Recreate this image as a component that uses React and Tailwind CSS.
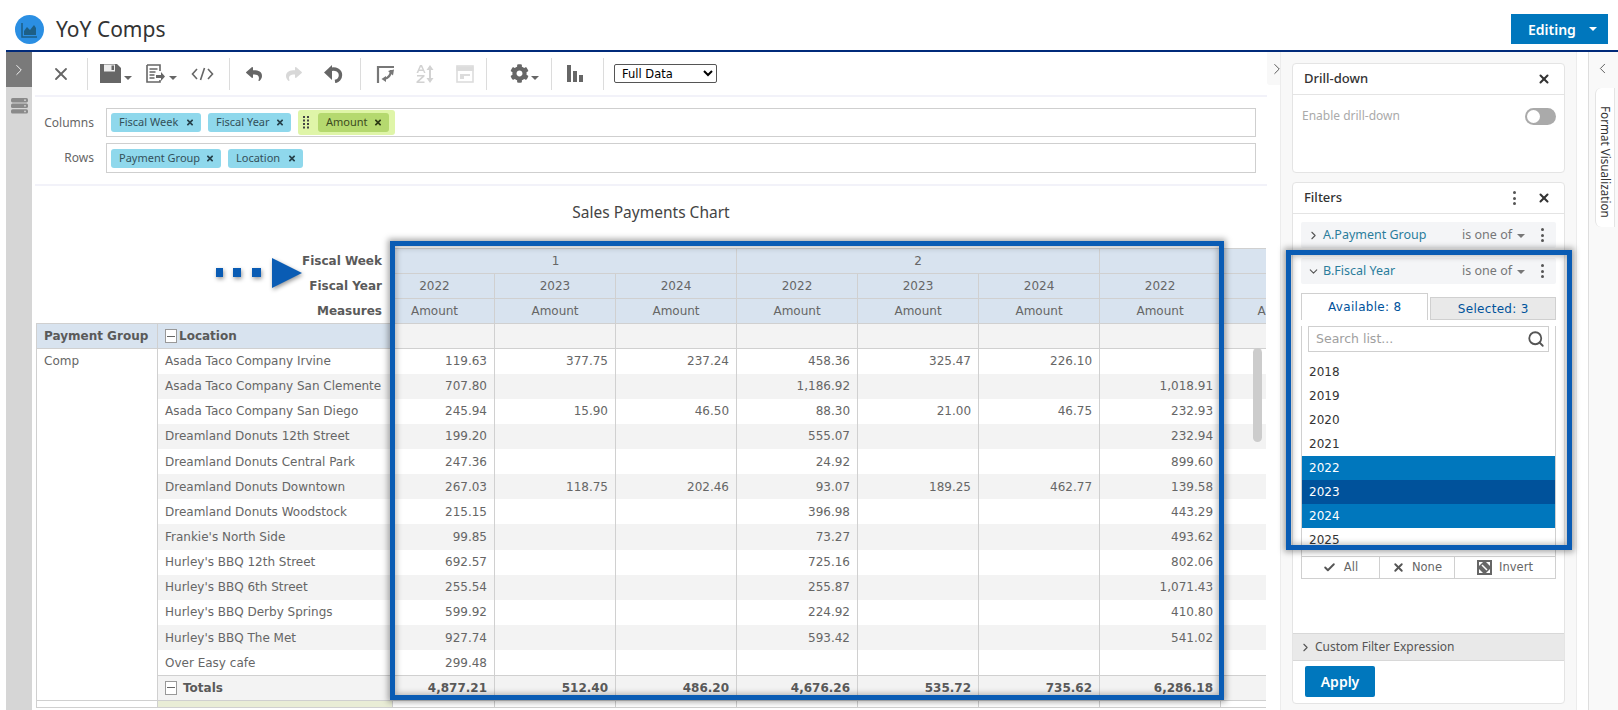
import React from 'react';
import { ChevronRight, ChevronLeft, ChevronDown, X, Search, Check } from 'lucide-react';
import { FaCog, FaReply, FaShare, FaTimes } from 'react-icons/fa';

const tableFont = "[font-family:'DejaVu_Sans',sans-serif]";

const rows = [
  ['Asada Taco Company Irvine', '119.63', '377.75', '237.24', '458.36', '325.47', '226.10', ''],
  ['Asada Taco Company San Clemente', '707.80', '', '', '1,186.92', '', '', '1,018.91'],
  ['Asada Taco Company San Diego', '245.94', '15.90', '46.50', '88.30', '21.00', '46.75', '232.93'],
  ['Dreamland Donuts 12th Street', '199.20', '', '', '555.07', '', '', '232.94'],
  ['Dreamland Donuts Central Park', '247.36', '', '', '24.92', '', '', '899.60'],
  ['Dreamland Donuts Downtown', '267.03', '118.75', '202.46', '93.07', '189.25', '462.77', '139.58'],
  ['Dreamland Donuts Woodstock', '215.15', '', '', '396.98', '', '', '443.29'],
  ["Frankie's North Side", '99.85', '', '', '73.27', '', '', '493.62'],
  ["Hurley's BBQ 12th Street", '692.57', '', '', '725.16', '', '', '802.06'],
  ["Hurley's BBQ 6th Street", '255.54', '', '', '255.87', '', '', '1,071.43'],
  ["Hurley's BBQ Derby Springs", '599.92', '', '', '224.92', '', '', '410.80'],
  ["Hurley's BBQ The Met", '927.74', '', '', '593.42', '', '', '541.02'],
  ['Over Easy cafe', '299.48', '', '', '', '', '', ''],
];
const totals = ['4,877.21', '512.40', '486.20', '4,676.26', '535.72', '735.62', '6,286.18'];
const years = ['2022', '2023', '2024', '2022', '2023', '2024', '2022'];
const colWidths = [121, 235, 102, 121, 121, 121, 121, 121, 121, 121];

const Logo = () => (
  <div className="w-[29px] h-[29px] rounded-full bg-[#2b8fe3] flex items-center justify-center">
    <svg width="17" height="16" viewBox="0 0 17 16" fill="none">
      <path d="M1 1v14h15" stroke="#1d5f86" strokeWidth="1.5" />
      <path d="M3 13V9l3-4 3 3 4-5 2 3v7z" fill="#1d5f86" />
    </svg>
  </div>
);

const ServerIcon = () => (
  <svg width="17" height="16" viewBox="0 0 17 16" fill="#8a8a8a">
    <rect x="0" y="0" width="17" height="4.4" rx="1.6" />
    <rect x="0" y="5.6" width="17" height="4.4" rx="1.6" />
    <rect x="0" y="11.2" width="17" height="4.4" rx="1.6" />
    <circle cx="14" cy="2.2" r="0.9" fill="#d6d6d6" />
    <circle cx="14" cy="7.8" r="0.9" fill="#d6d6d6" />
    <circle cx="14" cy="13.4" r="0.9" fill="#d6d6d6" />
  </svg>
);

const Caret = ({ className = 'border-t-[#666]' }) => (
  <span className={`inline-block w-0 h-0 border-x-[4px] border-x-transparent border-t-[4px] ${className}`} />
);

const Sep = ({ className }) => <div className={`w-px h-[32px] bg-[#dcdcdc] ${className}`} />;

const SaveIcon = () => (
  <svg width="21" height="19" viewBox="0 0 21 19">
    <path d="M0 0h17l4 4v15H0z" fill="#666" />
    <rect x="4" y="0.500" width="11" height="7" fill="#ececec" />
    <rect x="11.500" y="1.500" width="2.500" height="4.500" fill="#666" />
  </svg>
);

const DocIcon = () => (
  <svg width="20" height="19" viewBox="0 0 20 19" fill="none" stroke="#666">
    <path d="M1 1h13v6M14 16v2H1V1" strokeWidth="1.6" />
    <path d="M3.500 5h8M3.500 8h6M3.500 11h5M3.500 14h5" strokeWidth="1.400" />
    <path d="M10 11h5V8l4 4.500-4 4.500v-3h-5z" fill="#666" stroke="none" />
  </svg>
);

const CodeIcon = () => (
  <svg width="23" height="14" viewBox="0 0 23 14" fill="none" stroke="#666" strokeWidth="1.6">
    <path d="M6 2 1.500 7 6 12M17 2l4.500 5-4.500 5M13.500 1l-4 12" />
  </svg>
);

const RevertIcon = () => (
  <svg width="19" height="18" viewBox="0 0 19 18">
    <path d="M0 7.500 8 0v15z" fill="#666" />
    <path d="M6 4.500c6-1.500 10.500 1 10.500 5.500 0 3.500-2.500 6-5.500 6.500" fill="none" stroke="#666" strokeWidth="3.400" />
  </svg>
);

const SwapIcon = () => (
  <svg width="20" height="20" viewBox="0 0 20 20" fill="none" stroke="#777" strokeWidth="2.200">
    <path d="M2 19V3h16" />
    <path d="M15 6c0 5-2 8-7 9" />
    <path d="M5.500 15 10 12v6z" fill="#777" stroke="none" />
    <path d="M12 7l6-1.500-1 6z" fill="#777" stroke="none" />
  </svg>
);

const SortIcon = () => (
  <svg width="18" height="20" viewBox="0 0 18 20" fill="#d2d2d2">
    <path d="M4 1h2l3.500 8H8l-.8-2H3l-.8 2H.5zm1 1.800L3.500 5.500h3zM1 11h7.500v1.500L3 17.500h5.500V19H.5v-1.500L6 12.500H1z" />
    <path d="M14 1l3.500 5H15v8h2.500L14 19l-3.500-5H13V6h-2.500z" />
  </svg>
);

const LayoutIcon = () => (
  <svg width="18" height="18" viewBox="0 0 18 18" fill="none" stroke="#dcdcdc">
    <rect x="1" y="1" width="16" height="16" strokeWidth="1.6" />
    <rect x="1" y="2" width="16" height="3.500" fill="#dcdcdc" />
    <path d="M4 9h10v2H8v3H4z" fill="#dcdcdc" stroke="none" />
  </svg>
);

const BarsIcon = () => (
  <svg width="16" height="17" viewBox="0 0 16 17" fill="#666">
    <rect x="0" y="0" width="4" height="17" />
    <rect x="6" y="6" width="4" height="11" />
    <rect x="12" y="10" width="4" height="7" />
  </svg>
);

const GripIcon = () => (
  <svg width="7" height="13" viewBox="0 0 7 13" fill="#444">
    <rect x="0" y="0" width="2" height="2" />
    <rect x="4" y="0" width="2" height="2" />
    <rect x="0" y="3.500" width="2" height="2" />
    <rect x="4" y="3.500" width="2" height="2" />
    <rect x="0" y="7" width="2" height="2" />
    <rect x="4" y="7" width="2" height="2" />
    <rect x="0" y="10.500" width="2" height="2" />
    <rect x="4" y="10.500" width="2" height="2" />
  </svg>
);

const InvertIcon = () => (
  <svg width="15" height="15" viewBox="0 0 15 15">
    <rect width="15" height="15" fill="#666" />
    <path d="M2 2h4L2 6zM13 13H9l4-4zM13 2v4L9 2zM2 13V9l4 4z" fill="#fff" />
    <path d="M5 5l5 5" stroke="#fff" strokeWidth="1.500" />
  </svg>
);

const MinusBox = () => (
  <span className="inline-flex w-[12px] h-[14px] border border-[#999] bg-white items-center justify-center shrink-0">
    <span className="w-[8px] h-px bg-[#666]" />
  </span>
);

const Dots = ({ className = '' }) => (
  <div className={`flex flex-col gap-[2.5px] ${className}`}>
    <span className="w-[3px] h-[3px] rounded-full bg-[#555]" />
    <span className="w-[3px] h-[3px] rounded-full bg-[#555]" />
    <span className="w-[3px] h-[3px] rounded-full bg-[#555]" />
  </div>
);

const Chip = ({ label, className }) => (
  <div className={`h-[19px] rounded-[3px] bg-[#8fd8ec] flex items-center justify-between pl-[8px] pr-[7px] text-[11px] whitespace-nowrap text-[#33505a] ${className}`}>
    <span>{label}</span>
    <FaTimes className="w-[8px] h-[9px] text-[#25414b]" />
  </div>
);

const Toolbar = () => (
  <div className="h-[43px] flex items-center shrink-0">
    <X className="ml-[19px] w-[20px] h-[20px] text-[#666]" strokeWidth={2.2} />
    <Sep className="ml-[16px]" />
    <div className="ml-[12px]"><SaveIcon /></div>
    <Caret className="ml-[3px] mt-[8px] border-t-[#666]" />
    <div className="ml-[14px]"><DocIcon /></div>
    <Caret className="ml-[3px] mt-[8px] border-t-[#666]" />
    <div className="ml-[14px]"><CodeIcon /></div>
    <Sep className="ml-[15px]" />
    <FaReply className="ml-[15px] w-[18px] h-[16px] text-[#666]" />
    <FaShare className="ml-[22px] w-[18px] h-[16px] text-[#d8d8d8]" />
    <div className="ml-[21px]"><RevertIcon /></div>
    <Sep className="ml-[17px]" />
    <div className="ml-[15px]"><SwapIcon /></div>
    <div className="ml-[20px]"><SortIcon /></div>
    <div className="ml-[22px]"><LayoutIcon /></div>
    <Sep className="ml-[12px]" />
    <FaCog className="ml-[23px] w-[19px] h-[19px] text-[#666]" />
    <Caret className="ml-[2px] mt-[8px] border-t-[#666]" />
    <Sep className="ml-[12px]" />
    <div className="ml-[15px]"><BarsIcon /></div>
    <Sep className="ml-[20px]" />
    <select
      defaultValue="Full Data"
      className={`ml-[10px] w-[103px] h-[19px] border border-[#555] rounded-[2px] bg-white text-[11.5px] text-black pl-[3px] ${tableFont}`}
    >
      <option>Full Data</option>
    </select>
  </div>
);

const ShelfRow = ({ label, children, className }) => (
  <div className={`flex items-center ${className}`}>
    <div className="w-[62px] text-right text-[12px] text-[#666] shrink-0">{label}</div>
    <div className="ml-[12px] w-[1150px] border border-[#cfcfcf] flex items-center">{children}</div>
  </div>
);

const PivotTable = () => {
  const head = 'bg-[#d8e3ef] border border-[#d0d0d0] text-center font-normal';
  const label = 'text-right font-bold text-[#5a5a5a] pr-[10px]';
  return (
    <div className="w-[1230px] ml-[4px] overflow-hidden">
      <table className={`table-fixed w-[1305px] text-[12px] text-[#666] ${tableFont}`}>
        <colgroup>
          {colWidths.map((w, i) => (
            <col key={i} style={{ width: w }} />
          ))}
        </colgroup>
        <tbody>
          <tr className="h-[25px]">
            <td colSpan={2} className={label}>Fiscal Week</td>
            <td colSpan={3} className={`${head} pr-[18px]`}>1</td>
            <td colSpan={3} className={head}>2</td>
            <td className={head}></td>
            <td className={head}></td>
          </tr>
          <tr className="h-[25px]">
            <td colSpan={2} className={label}>Fiscal Year</td>
            {years.map((y, i) => (
              <td key={i} className={`${head} ${i === 0 ? 'pr-[18px]' : ''}`}>{y}</td>
            ))}
            <td className={head}></td>
          </tr>
          <tr className="h-[25px]">
            <td colSpan={2} className={label}>Measures</td>
            {years.map((y, i) => (
              <td key={i} className={`${head} ${i === 0 ? 'pr-[18px]' : ''}`}>Amount</td>
            ))}
            <td className={head}>Amount</td>
          </tr>
          <tr className="h-[25px]">
            <td className="bg-[#d8e3ef] border border-[#d0d0d0] font-bold text-[#5a5a5a] pl-[7px] whitespace-nowrap">Payment Group</td>
            <td className="bg-[#d8e3ef] border border-[#d0d0d0] font-bold text-[#5a5a5a] pl-[7px]">
              <div className="flex items-center gap-[2px]"><MinusBox />Location</div>
            </td>
            {colWidths.slice(2).map((w, i) => (
              <td key={i} className="bg-[#f3f3f3] border border-[#d0d0d0]"></td>
            ))}
          </tr>
          {rows.map((r, i) => (
            <tr key={r[0]} className="h-[25.15px]">
              {i === 0 && (
                <td rowSpan={14} className="align-top pl-[7px] pt-[3px] bg-white border border-[#d0d0d0]">Comp</td>
              )}
              <td className={`pl-[7px] whitespace-nowrap border-x border-[#d0d0d0] ${i % 2 ? 'bg-[#f3f3f3]' : 'bg-white'}`}>{r[0]}</td>
              {r.slice(1).map((v, j) => (
                <td key={j} className={`text-right pr-[7px] border-x border-[#d0d0d0] ${i % 2 ? 'bg-[#f3f3f3]' : 'bg-white'}`}>{v}</td>
              ))}
              <td className={`border-x border-[#d0d0d0] ${i % 2 ? 'bg-[#f3f3f3]' : 'bg-white'}`}></td>
            </tr>
          ))}
          <tr className="h-[25px] font-bold text-[#5a5a5a]">
            <td className="pl-[7px] border border-[#d0d0d0] bg-[#f3f3f3]">
              <div className="flex items-center gap-[6px]"><MinusBox />Totals</div>
            </td>
            {totals.map((v, i) => (
              <td key={i} className="text-right pr-[7px] border border-[#d0d0d0] bg-[#f3f3f3]">{v}</td>
            ))}
            <td className="border border-[#d0d0d0] bg-[#f3f3f3]"></td>
          </tr>
          <tr className="h-[7px] leading-[0]">
            <td className="border border-[#d0d0d0]"></td>
            <td className="border border-[#d0d0d0] bg-[#e9edd6]"></td>
            {colWidths.slice(2).map((w, i) => (
              <td key={i} className="border border-[#d0d0d0]"></td>
            ))}
          </tr>
        </tbody>
      </table>
    </div>
  );
};

const FilterRow = ({ name, open, className }) => (
  <div className={`mx-[8px] h-[26px] bg-[#f4f5f7] rounded-[2px] flex items-center pl-[6px] pr-[12px] text-[12.5px] ${className}`}>
    {open ? (
      <ChevronDown className="w-[13px] h-[13px] text-[#555]" />
    ) : (
      <ChevronRight className="w-[13px] h-[13px] text-[#555]" />
    )}
    <span className="ml-[3px] text-[#2a7d9c]">{name}</span>
    <span className="ml-auto text-[12.5px] text-[#777]">is one of</span>
    <Caret className="ml-[5px] mt-[2px] border-t-[#777]" />
    <Dots className="ml-[16px]" />
  </div>
);

const YearList = () => {
  const years = ['2018', '2019', '2020', '2021', '2022', '2023', '2024', '2025'];
  const bg = { 2022: 'bg-[#0077bd] text-white', 2023: 'bg-[#00529b] text-white', 2024: 'bg-[#0077bd] text-white' };
  return (
    <div className={`mt-[8px] h-[196px] overflow-hidden text-[12px] text-[#333] ${tableFont}`}>
      {years.map((y) => (
        <div key={y} className={`h-[24px] pb-px flex items-center pl-[7px] ${bg[y] || ''}`}>{y}</div>
      ))}
    </div>
  );
};

const FilterCard = () => (
  <div className="mt-[9px] h-[522px] bg-white border border-[#e4e4e4] rounded-[4px] flex flex-col">
    <div className="h-[31px] shrink-0 border-b border-[#e4e4e4] flex items-center pl-[11px] pr-[13px] text-[13px] text-[#333] font-medium">
      Filters
      <Dots className="ml-auto" />
      <X className="ml-[21px] w-[14px] h-[14px] text-[#333]" strokeWidth={3.5} />
    </div>
    <FilterRow name="A.Payment Group" className="mt-[8px]" />
    <FilterRow name="B.Fiscal Year" open className="mt-[10px]" />
    <div className={`mx-[8px] mt-[9px] ${tableFont}`}>
      <div className="h-[27px] flex items-end text-[12px] text-[#00529b]">
        <div className="w-[129px] h-[27px] bg-white border-x border-t border-[#d0d0d0] flex items-center justify-center tracking-[0.3px]">Available: 8</div>
        <div className="ml-[2px] w-[127px] h-[23px] bg-[#e9e9e9] border-x border-t border-b border-[#d0d0d0] flex items-center justify-center tracking-[0.3px]">Selected: 3</div>
      </div>
      <div className="border-x border-[#d0d0d0]">
        <div className="mx-[6px] mt-[6px] h-[26px] border border-[#cfcfcf] flex items-center pl-[7px] pr-[3px]">
          <span className="text-[12.5px] text-[#a0a0a0]">Search list...</span>
          <Search className="ml-auto w-[18px] h-[18px] text-[#555]" strokeWidth={2.4} />
        </div>
        <YearList />
      </div>
      <div className="h-[23px] border-y border-x border-[#d0d0d0] flex text-[11.5px] text-[#666]">
        <div className="w-[78px] border-r border-[#d0d0d0] flex items-center justify-center gap-[8px]">
          <Check className="w-[13px] h-[13px] text-[#555]" strokeWidth={3.5} />All
        </div>
        <div className="w-[75px] border-r border-[#d0d0d0] flex items-center justify-center gap-[7px]">
          <X className="w-[13px] h-[13px] text-[#555]" strokeWidth={3.5} />None
        </div>
        <div className="flex-1 flex items-center justify-center gap-[7px]">
          <InvertIcon />Invert
        </div>
      </div>
    </div>
    <div className="mt-auto h-[28px] shrink-0 bg-[#e9e9e9] border-y border-[#d8d8d8] flex items-center pl-[6px] text-[12px] text-[#555]">
      <ChevronRight className="w-[13px] h-[13px] text-[#555]" />
      <span className="ml-[3px]">Custom Filter Expression</span>
    </div>
    <div className="h-[42px] shrink-0 pt-[5px] pl-[12px]">
      <button className="w-[70px] h-[31px] rounded-[2px] bg-[#0077bd] text-white text-[14px] font-semibold">Apply</button>
    </div>
  </div>
);

const RightPanel = () => (
  <div className="w-[297px] shrink-0 bg-[#f8f8f8] border-x border-[#ececec] px-[11px] pt-[11px]">
    <div className="h-[110px] bg-white border border-[#e4e4e4] rounded-[4px]">
      <div className="h-[31px] border-b border-[#e4e4e4] flex items-center pl-[11px] pr-[13px] text-[13px] text-[#333] font-medium">
        Drill-down
        <X className="ml-auto w-[14px] h-[14px] text-[#333]" strokeWidth={3.5} />
      </div>
      <div className="mt-[12px] pl-[9px] pr-[8px] flex items-center justify-between text-[12px] text-[#aaa]">
        Enable drill-down
        <div className="w-[31px] h-[17px] rounded-full bg-[#aaa] flex items-center pl-[2px]">
          <span className="w-[13px] h-[13px] rounded-full bg-white" />
        </div>
      </div>
    </div>
    <FilterCard />
  </div>
);

export default function App() {
  return (
    <div className="relative w-[1618px] h-[710px] overflow-hidden bg-white [font-family:'Noto_Sans',sans-serif]">
      <div className="h-[50px] flex items-end pl-[15px] pr-[10px] pb-[6px]">
        <Logo />
        <div className="ml-[12px] mb-[1px] text-[21px] leading-[28px] text-[#333]">YoY Comps</div>
        <div className="ml-auto w-[97px] h-[30px] bg-[#0077bd] text-white text-[14px] font-semibold flex items-center pl-[17px]">
          Editing
          <Caret className="ml-[13px] border-t-white" />
        </div>
      </div>
      <div className="ml-[6px] h-[2px] bg-[#002a7a]" />

      <div className="ml-[6px] h-[658px] flex">
        <div className="w-[26px] shrink-0 bg-[#d6d6d6]">
          <div className="h-[35px] bg-[#7a7a7a] flex items-center justify-center">
            <ChevronRight className="w-[18px] h-[18px] text-white" strokeWidth={1.2} />
          </div>
          <div className="mt-[11px] flex justify-center"><ServerIcon /></div>
        </div>

        <div className="w-[1235px] shrink-0 flex flex-col">
          <Toolbar />
          <div className="ml-[3px] h-[2px] bg-[#f2f2f9] shrink-0" />
          <ShelfRow label="Columns" className="mt-[11px]">
            <div className="h-[27px] flex items-center pl-[4px]">
              <Chip label="Fiscal Week" className="w-[90px]" />
              <Chip label="Fiscal Year" className="ml-[7px] w-[83px]" />
              <div className="ml-[7px] w-[97px] h-[25px] rounded-[3px] bg-[#dff5a8] flex items-center">
                <div className="ml-[5px]"><GripIcon /></div>
                <div className="ml-[8px] w-[71px] h-[19px] rounded-[3px] bg-[#b5d96f] flex items-center justify-between pl-[8px] pr-[7px] text-[11px] text-[#3c4a20]">
                  Amount
                  <FaTimes className="w-[8px] h-[9px] text-[#2c3a14]" />
                </div>
              </div>
            </div>
          </ShelfRow>
          <ShelfRow label="Rows" className="mt-[6px]">
            <div className="h-[28px] flex items-center pl-[4px]">
              <Chip label="Payment Group" className="w-[110px]" />
              <Chip label="Location" className="ml-[7px] w-[75px]" />
            </div>
          </ShelfRow>
          <div className="ml-[3px] mt-[11px] h-[2px] bg-[#f2f2f9] shrink-0" />
          <div className="mt-[14px] h-[24px] ml-[4px] w-[1230px] text-center text-[15.5px] leading-[24px] text-[#444]">Sales Payments Chart</div>
          <div className="mt-[24px]"><PivotTable /></div>
        </div>

        <div className="relative z-10 w-[13px] h-[33px] shrink-0 bg-[#f8f8f8] flex items-center pl-[1px] rounded-bl-[3px]">
          <ChevronRight className="w-[18px] h-[18px] shrink-0 text-[#555]" strokeWidth={1.3} />
        </div>
        <RightPanel />
        <div className="ml-[11px] flex-1 bg-[#f9f9f9] border-l border-[#dedede] pl-[6px]">
          <ChevronLeft className="mt-[8px] ml-[-1px] w-[17px] h-[17px] text-[#555]" strokeWidth={1.3} />
          <div className="mt-[11px] h-[139px] bg-white border-y border-l border-[#e4e4e4] rounded-l-[6px] flex justify-center pt-[9px] text-[11.7px] text-[#333] [writing-mode:vertical-rl]">
            Format Visualization
          </div>
        </div>
      </div>

      {/* callout boxes drawn over the screenshot */}
      <div className="absolute left-[1253px] top-[348px] w-[9px] h-[94px] rounded-full bg-[#cccccc]" />
      <div className="absolute left-[390px] top-[241px] w-[834px] h-[459px] border-[5px] border-[#0a5cb4] shadow-[0_0_6px_2px_rgba(0,0,0,0.35),inset_0_0_6px_1px_rgba(0,0,0,0.3)]" />
      <div className="absolute left-[1286px] top-[250px] w-[286px] h-[300px] border-[5px] border-[#0a5cb4] shadow-[0_0_6px_2px_rgba(0,0,0,0.35),inset_0_0_6px_1px_rgba(0,0,0,0.3)]" />
      <svg className="absolute left-[213px] top-[255px] drop-shadow-[1px_2px_2px_rgba(0,0,0,0.4)]" width="92" height="36" viewBox="0 0 92 36" fill="#0a5cb4">
        <rect x="3" y="13" width="7" height="9" />
        <rect x="20" y="13" width="8" height="9" />
        <rect x="39" y="13" width="9" height="9" />
        <path d="M59 3l30 15-30 15z" />
      </svg>
    </div>
  );
}
